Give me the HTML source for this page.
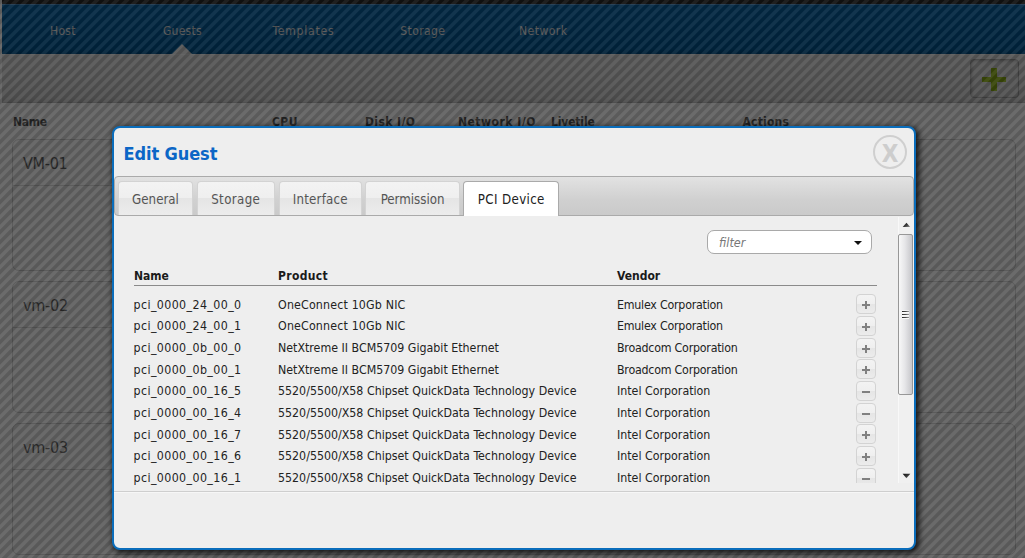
<!DOCTYPE html>
<html>
<head>
<meta charset="utf-8">
<title>Kimchi</title>
<style>
*{box-sizing:border-box;}
html,body{margin:0;padding:0;}
body{width:1025px;height:558px;overflow:hidden;background:#fff;position:relative;
 font-family:"DejaVu Sans Condensed","Liberation Sans",sans-serif;font-size:12px;color:#222;}
.abs{position:absolute;}
/* ---------- underlying page ---------- */
#topbar{left:2px;top:0;width:1023px;height:4px;background:#2e2e2e;}
#nav{left:2px;top:4px;width:1023px;height:50px;background:linear-gradient(#0869b0,#005d9e 90%,#004f88);border-top:1px solid #4a90cc;}
#nav a{position:absolute;top:0;height:49px;line-height:52px;white-space:nowrap;color:#e0e0e0;font-size:12px;text-decoration:none;}
#nav .tri{position:absolute;left:169.5px;top:39px;width:0;height:0;border-left:10px solid transparent;border-right:10px solid transparent;border-bottom:10px solid #e2e2e2;}
#toolbar{left:2px;top:54px;width:1023px;height:49px;background:linear-gradient(#e3e3e3,#dcdcdc 50%,#d0d0d0 92%,#c2c2c2);border-bottom:1px solid #b2b2b2;border-top:1px solid #eee;}
#addbtn{left:969.5px;top:59px;width:49px;height:39px;border:1px solid #a2a2a2;border-radius:4px;background:linear-gradient(#dedede,#d6d6d6);box-shadow:inset 1px 1px 3px rgba(0,0,0,.25);}
#addbtn i{position:absolute;background:#93b614;}
.colh{top:114px;font-weight:bold;font-size:12px;line-height:16px;color:#555;white-space:nowrap;letter-spacing:-.3px;}
.guest{left:12px;width:1004px;height:132px;border:1px solid #d2d2d2;border-radius:7px;background:#fcfcfc;}
.guest .nm{position:absolute;left:10px;top:12px;font-size:16px;letter-spacing:-.25px;line-height:24px;color:#666;}
.guest .dv{position:absolute;left:0;top:45px;width:260px;height:1px;background:#d6d6d6;}
/* ---------- overlay ---------- */
#overlay{left:0;top:0;width:1025px;height:558px;display:block;}
/* ---------- dialog ---------- */
#win{left:112px;top:126px;width:804px;height:424px;border:2px solid #0a6dbb;border-radius:8px;background:#eee;box-shadow:2px 2px 6px 1px rgba(0,0,0,.8);}
#title{left:9.5px;top:13.5px;font-size:18px;letter-spacing:-.1px;font-weight:bold;color:#0b66c6;line-height:24px;white-space:nowrap;}
#close{left:759px;top:7px;width:34px;height:34px;border:2px solid #cfcfcf;border-radius:50%;color:#cdcdcd;font-weight:bold;font-size:24px;line-height:35px;text-align:center;}
#tabbar{left:0;top:48px;width:800px;height:40px;border:1px solid #aaa;border-radius:4px;background:linear-gradient(#e2e2e2,#d0d0d0 60%,#cacaca);}
.tab{position:absolute;top:4px;height:34px;border:1px solid #d3d3d3;border-bottom:0;border-radius:4px 4px 0 0;
 background:linear-gradient(#f3f3f3 0,#efefef 49%,#e5e5e5 50%,#ececec 100%);color:#555;font-size:13.2px;line-height:36px;text-align:center;white-space:nowrap;}
.tab.act{height:35px;background:#fff;border-color:#aaa;color:#212121;}
#filter{left:593px;top:102px;width:165px;height:24px;border:1px solid #a9a9a9;border-radius:7px;background:#fff;}
#filter span{position:absolute;left:11px;top:1px;line-height:22px;font-style:italic;color:#777;font-size:12.5px;}
#filter i{position:absolute;left:146px;top:10px;width:0;height:0;border-left:4px solid transparent;border-right:4px solid transparent;border-top:4.5px solid #111;}
.hd{top:140px;font-weight:bold;font-size:12px;line-height:16px;color:#1a1a1a;white-space:nowrap;}
#hline{left:20px;top:157px;width:743px;height:1px;background:#8a8a8a;}
#rows{left:0;top:89px;width:784px;height:270px;overflow:hidden;}
.row{position:absolute;left:0;width:784px;height:22px;line-height:22px;white-space:nowrap;font-size:12.3px;}
.row span{position:absolute;top:0;}
.row .c1{left:19.5px;letter-spacing:.4px;}
.row .c2{left:164px;}
.row .c3{left:503px;}
.row b{position:absolute;left:742px;top:.7px;width:20px;height:20px;border:1px solid #d3d3d3;border-radius:4px;background:linear-gradient(#f3f3f3 0,#efefef 49%,#e5e5e5 50%,#ececec 100%);}
.row b:before{content:"";position:absolute;left:5px;top:9px;width:8px;height:2px;background:#808080;}
.row b.p:after{content:"";position:absolute;left:8px;top:6px;width:2px;height:8px;background:#808080;}
.row b.last{height:15px;border-bottom:0;border-radius:4px 4px 0 0;background:linear-gradient(#f3f3f3 0,#efefef 66%,#e5e5e5 67%,#e8e8e8 100%);}
#sb{left:784px;top:89px;width:16px;height:266px;background:#f0f0f0;border-left:1px solid #f8f8f8;}
#sb svg{position:absolute;left:-1px;top:0;}
#sb .th{position:absolute;left:-1px;top:17px;width:15px;height:161px;border:1px solid #979797;border-radius:2px;background:linear-gradient(90deg,#f8f8f8,#e6e6e8 45%,#c6c6ca);}
#sb .th u{position:absolute;left:3px;width:7px;height:1px;background:linear-gradient(90deg,#2a2a2a,#4a4a4a 50%,#9a9a9a);box-shadow:0 1px 0 #fafafa,0 -1px 0 rgba(255,255,255,.5);}
#fline{left:0;top:363px;width:800px;height:2px;background:linear-gradient(#cecece 50%,#f6f6f6 50%);}
</style>
</head>
<body>
<!-- underlying page -->
<div id="topbar" class="abs"></div>
<div id="nav" class="abs">
 <a style="left:48px;letter-spacing:.27px">Host</a><a style="left:161px;letter-spacing:.25px">Guests</a><a style="left:270.5px;letter-spacing:.8px">Templates</a><a style="left:398.3px;letter-spacing:.41px">Storage</a><a style="left:517px;letter-spacing:.49px">Network</a>
 <div class="tri"></div>
</div>
<div id="toolbar" class="abs"></div>
<div id="addbtn" class="abs"><i style="left:11px;top:16.7px;width:24.5px;height:5.6px"></i><i style="left:20.6px;top:8px;width:5.7px;height:23.3px"></i></div>
<div class="abs colh" style="left:13px">Name</div>
<div class="abs colh" style="left:272px;letter-spacing:.45px">CPU</div>
<div class="abs colh" style="left:365px;letter-spacing:.4px">Disk I/O</div>
<div class="abs colh" style="left:458px;letter-spacing:.5px">Network I/O</div>
<div class="abs colh" style="left:551px;letter-spacing:-.15px">Livetile</div>
<div class="abs colh" style="left:742.5px;letter-spacing:.2px">Actions</div>
<div class="abs guest" style="top:139px"><div class="nm">VM-01</div><div class="dv"></div></div>
<div class="abs guest" style="top:281px"><div class="nm">vm-02</div><div class="dv"></div></div>
<div class="abs guest" style="top:423px"><div class="nm">vm-03</div><div class="dv"></div></div>
<!-- overlay -->
<svg id="overlay" class="abs" width="1025" height="558" viewBox="0 0 1025 558">
 <defs><pattern id="stripes" width="10" height="10" patternUnits="userSpaceOnUse">
  <rect x="-1" y="-1" width="12" height="12" fill="#000"/>
  <path d="M5.7 -1 L10.7 -1 L-1 10.7 L-1 5.7 Z M11 3.7 L11 8.7 L8.7 11 L3.7 11 Z" fill="#191919"/>
 </pattern></defs>
 <rect width="1025" height="558" fill="url(#stripes)" opacity="0.645"/>
</svg>
<!-- dialog -->
<div id="win" class="abs">
 <div id="title" class="abs">Edit Guest</div>
 <div id="close" class="abs">X</div>
 <div id="tabbar" class="abs">
  <div class="tab" style="left:3px;width:75px">General</div>
  <div class="tab" style="left:81.5px;width:78.5px;letter-spacing:.38px">Storage</div>
  <div class="tab" style="left:163.5px;width:83.5px;letter-spacing:.22px">Interface</div>
  <div class="tab" style="left:250.3px;width:94.6px">Permission</div>
  <div class="tab act" style="left:348.3px;width:96px;letter-spacing:.36px">PCI Device</div>
 </div>
 <div id="rows" class="abs">
  <div class="row" style="top:76.5px"><span class="c1">pci_0000_24_00_0</span><span class="c2" style="letter-spacing:.17px">OneConnect 10Gb NIC</span><span class="c3" style="letter-spacing:-.22px">Emulex Corporation</span><b class="p"></b></div>
  <div class="row" style="top:98.2px"><span class="c1">pci_0000_24_00_1</span><span class="c2" style="letter-spacing:.17px">OneConnect 10Gb NIC</span><span class="c3" style="letter-spacing:-.22px">Emulex Corporation</span><b class="p"></b></div>
  <div class="row" style="top:119.9px"><span class="c1">pci_0000_0b_00_0</span><span class="c2">NetXtreme II BCM5709 Gigabit Ethernet</span><span class="c3" style="letter-spacing:-.22px">Broadcom Corporation</span><b class="p"></b></div>
  <div class="row" style="top:141.6px"><span class="c1">pci_0000_0b_00_1</span><span class="c2">NetXtreme II BCM5709 Gigabit Ethernet</span><span class="c3" style="letter-spacing:-.22px">Broadcom Corporation</span><b class="p"></b></div>
  <div class="row" style="top:163.3px"><span class="c1">pci_0000_00_16_5</span><span class="c2">5520/5500/X58 Chipset QuickData Technology Device</span><span class="c3">Intel Corporation</span><b></b></div>
  <div class="row" style="top:185px"><span class="c1">pci_0000_00_16_4</span><span class="c2">5520/5500/X58 Chipset QuickData Technology Device</span><span class="c3">Intel Corporation</span><b></b></div>
  <div class="row" style="top:206.7px"><span class="c1">pci_0000_00_16_7</span><span class="c2">5520/5500/X58 Chipset QuickData Technology Device</span><span class="c3">Intel Corporation</span><b class="p"></b></div>
  <div class="row" style="top:228.4px"><span class="c1">pci_0000_00_16_6</span><span class="c2">5520/5500/X58 Chipset QuickData Technology Device</span><span class="c3">Intel Corporation</span><b class="p"></b></div>
  <div class="row" style="top:250.1px"><span class="c1">pci_0000_00_16_1</span><span class="c2">5520/5500/X58 Chipset QuickData Technology Device</span><span class="c3">Intel Corporation</span><b class="last"></b></div>
 </div>
 <div id="filter" class="abs"><span>filter</span><i></i></div>
 <div class="abs hd" style="left:20px">Name</div>
 <div class="abs hd" style="left:164px;letter-spacing:.35px">Product</div>
 <div class="abs hd" style="left:503px">Vendor</div>
 <div id="hline" class="abs"></div>
 <div id="sb" class="abs"><svg width="16" height="266" viewBox="0 0 16 266"><defs><linearGradient id="ag" x1="0" y1="0" x2="1" y2="1"><stop offset="0" stop-color="#111"/><stop offset=".55" stop-color="#3a3a3a"/><stop offset="1" stop-color="#999"/></linearGradient></defs><path d="M8.45 5.7 L12.2 10 L4.7 10 Z" fill="url(#ag)"/><path d="M4.6 256.8 L12.3 256.8 L8.45 261.2 Z" fill="url(#ag)"/></svg><div class="th"><u style="top:76px"></u><u style="top:79px"></u><u style="top:82px"></u></div></div>
 <div id="fline" class="abs"></div>
</div>
</body>
</html>
